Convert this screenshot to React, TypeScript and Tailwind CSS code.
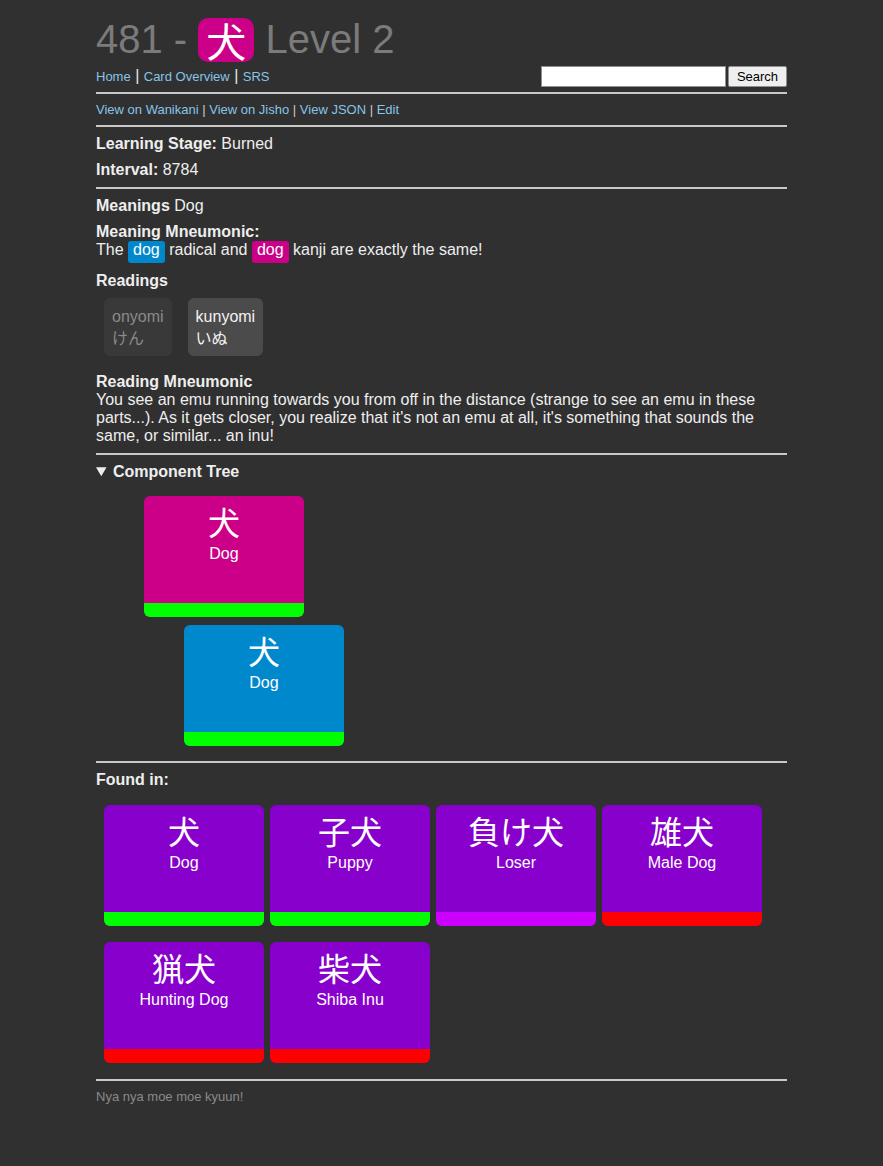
const found = [
	{ jp: "犬", en: "Dog", bar: "bg-[#00ff00]" },
	{ jp: "子犬", en: "Puppy", bar: "bg-[#00ff00]" },
	{ jp: "負け犬", en: "Loser", bar: "bg-[#cc00ff]" },
	{ jp: "雄犬", en: "Male Dog", bar: "bg-[#ff0000]" },
	{ jp: "猟犬", en: "Hunting Dog", bar: "bg-[#ff0000]" },
	{ jp: "柴犬", en: "Shiba Inu", bar: "bg-[#ff0000]" },
];

const Rule = () => <div className="h-[2px] bg-[#c9c9c9]" />;

const Card = ({
	jp,
	en,
	bg,
	bar,
	className = "",
}: {
	jp: string;
	en: string;
	bg: string;
	bar: string;
	className?: string;
}) => (
	<div className={`w-40 h-[121px] rounded-[6px] overflow-hidden flex flex-col text-white ${bg} ${className}`}>
		<div className="flex-1 flex flex-col items-center pt-[7px]">
			<div className="text-[32px] leading-[36px] font-['Noto_Sans_CJK_JP',sans-serif]">{jp}</div>
			<div className="mt-[6px] text-[16px] leading-[18px]">{en}</div>
		</div>
		<div className={`h-[14px] ${bar}`} />
	</div>
);

const App = () => {
	return (
		<div className="min-h-screen bg-[#303030] text-[#eeeeee] font-['Liberation_Sans','Noto_Sans_CJK_JP',sans-serif]">
			<div className="w-[691px] mx-auto pt-[18px]">
				{/* title */}
				<div className="flex items-start h-[44px] text-[40px] text-[#7b7b7b]">
					<span className="leading-[42px] whitespace-pre">481 - </span>
					<span className="h-[44px] px-[8px] rounded-[10px] bg-[#cc0088] text-white leading-[44px] font-['Noto_Sans_CJK_JP',sans-serif]">
						犬
					</span>
					<span className="leading-[42px] whitespace-pre"> Level 2</span>
				</div>

				<div className="mt-[4px] h-[21px] flex items-center justify-between">
					<div className="text-[16px] leading-[18px] text-[#e5e5e5]">
						<a className="text-[13px] text-[#87c4e8]">Home</a> |{" "}
						<a className="text-[13px] text-[#87c4e8]">Card Overview</a> |{" "}
						<a className="text-[13px] text-[#87c4e8]">SRS</a>
					</div>
					<div className="flex items-center gap-[2px]">
						<input className="w-[185px] h-[21px] bg-white border border-[#8f8f8f] text-[13px] text-black px-1 outline-none" />
						<button className="w-[59px] h-[21px] bg-[#efefef] border border-[#8f8f8f] rounded-[2px] text-[13px] text-black leading-none">
							Search
						</button>
					</div>
				</div>

				<div className="mt-[5px]">
					<Rule />
				</div>

				<div className="py-[8px] text-[13px] leading-[15px] text-[#cccccc]">
					<a className="text-[#87c4e8]">View on Wanikani</a> | <a className="text-[#87c4e8]">View on Jisho</a> |{" "}
					<a className="text-[#87c4e8]">View JSON</a> | <a className="text-[#87c4e8]">Edit</a>
				</div>
				<Rule />

				<div className="pt-[8px] pb-[8px] flex flex-col gap-[8px] text-[16px] leading-[18px]">
					<p>
						<b>Learning Stage:</b> Burned
					</p>
					<p>
						<b>Interval:</b> 8784
					</p>
				</div>
				<Rule />

				<div className="pt-[8px] pb-[8px] text-[16px] leading-[18px] flex flex-col">
					<p>
						<b>Meanings</b> Dog
					</p>
					<div className="mt-[8px]">
						<b>Meaning Mneumonic:</b>
						<div>
							The <span className="inline-block px-[5px] pb-[4px] rounded-[3px] bg-[#0088cc] text-white">dog</span>{" "}
							radical and{" "}
							<span className="inline-block px-[5px] pb-[4px] rounded-[3px] bg-[#cc0088] text-white">dog</span> kanji are
							exactly the same!
						</div>
					</div>
					<p className="mt-[9px] font-bold">Readings</p>
					<div className="flex mt-[8px] ml-[8px] gap-[16px] leading-[21px]">
						<div className="p-[8px] rounded-[6px] bg-[#393939] text-[#8a8a8a]">
							<div>onyomi</div>
							<div className="font-['Noto_Sans_CJK_JP',sans-serif]">けん</div>
						</div>
						<div className="p-[8px] rounded-[6px] bg-[#4b4b4b] text-[#f2f2f2]">
							<div>kunyomi</div>
							<div className="font-['Noto_Sans_CJK_JP',sans-serif]">いぬ</div>
						</div>
					</div>
					<div className="mt-[17px]">
						<b>Reading Mneumonic</b>
						<div>
							You see an emu running towards you from off in the distance (strange to see an emu in these parts...). As
							it gets closer, you realize that it's not an emu at all, it's something that sounds the same, or
							similar... an inu!
						</div>
					</div>
				</div>
				<Rule />

				<details open className="pt-[8px] pb-[15px] text-[16px] leading-[18px]">
					<summary className="font-bold cursor-pointer">Component Tree</summary>
					<div className="mt-[15px] flex flex-col gap-[8px]">
						<Card jp="犬" en="Dog" bg="bg-[#cc0088]" bar="bg-[#00ff00]" className="ml-[48px]" />
						<Card jp="犬" en="Dog" bg="bg-[#0088cc]" bar="bg-[#00ff00]" className="ml-[88px]" />
					</div>
				</details>
				<Rule />

				<div className="pt-[8px] pb-[16px] text-[16px] leading-[18px]">
					<p className="font-bold">Found in:</p>
					<div className="mt-[16px] ml-[8px] flex flex-wrap gap-x-[6px] gap-y-[16px]">
						{found.map((f) => (
							<Card key={f.jp} jp={f.jp} en={f.en} bg="bg-[#8800cc]" bar={f.bar} />
						))}
					</div>
				</div>
				<Rule />

				<p className="pt-[8px] text-[13px] leading-[15px] text-[#8a8a8a]">Nya nya moe moe kyuun!</p>
			</div>
		</div>
	);
};

export default App;
